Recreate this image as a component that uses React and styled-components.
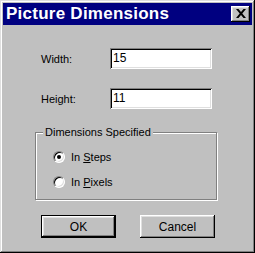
import React from 'react';
import styled, { createGlobalStyle } from 'styled-components';

const GlobalStyle = createGlobalStyle`
  html, body {
    margin: 0;
    padding: 0;
    background: #c0c0c0;
  }
  body {
    font-family: "Liberation Sans", Arial, sans-serif;
  }
`;

const Window = styled.div`
  box-sizing: border-box;
  width: 255px;
  height: 253px;
  padding: 3px;
  background: #c0c0c0;
  box-shadow: inset -1px -1px #000, inset 1px 1px #dfdfdf,
    inset -2px -2px #808080, inset 2px 2px #fff;
  display: flex;
  flex-direction: column;
`;

const TitleBar = styled.div`
  height: 22px;
  background: #000080;
  display: flex;
  align-items: center;
  justify-content: space-between;
  padding: 0 2px 0 3px;
`;

const Title = styled.span`
  color: #fff;
  font-weight: bold;
  font-size: 17px;
  letter-spacing: 0.25px;
  line-height: 22px;
`;

const CloseButton = styled.div`
  box-sizing: border-box;
  width: 19px;
  height: 16px;
  background: #c0c0c0;
  box-shadow: inset -1px -1px #000, inset 1px 1px #fff,
    inset -2px -2px #808080, inset 2px 2px #dfdfdf;
  display: flex;
  align-items: center;
  justify-content: center;
  padding-bottom: 1px;
`;

const Body = styled.div`
  display: flex;
  flex-direction: column;
  padding-left: 32px;
  font-size: 11px;
  color: #000;
`;

const FieldRow = styled.div`
  display: grid;
  grid-template-columns: 69px 102px;
  align-items: center;
  padding-left: 6px;
  margin-top: ${props => props.$top}px;
`;

const Label = styled.span`
  font-size: 11px;
`;

const TextBox = styled.div`
  box-sizing: border-box;
  height: 21px;
  background: #fff;
  box-shadow: inset 1px 1px #808080, inset -1px -1px #fff,
    inset 2px 2px #000, inset -2px -2px #dfdfdf;
  padding: 0 0 0 3px;
  font-size: 12px;
  line-height: 21px;
`;

const GroupBox = styled.div`
  position: relative;
  box-sizing: border-box;
  width: 182px;
  height: 68px;
  margin-top: 23px;
  border: 1px solid #808080;
  box-shadow: inset 1px 1px #fff, 1px 1px #fff;
  padding: 17px 0 0 17px;
  display: flex;
  flex-direction: column;
  gap: 12px;
`;

const GroupLabel = styled.span`
  position: absolute;
  top: -7px;
  left: 7px;
  padding: 0 2px;
  background: #c0c0c0;
  line-height: 13px;
`;

const RadioRow = styled.label`
  display: flex;
  align-items: center;
  gap: 6px;
  height: 13px;
`;

const Radio = styled.span`
  position: relative;
  box-sizing: border-box;
  width: 12px;
  height: 12px;
  border-radius: 50%;
  background: #fff;
  border: 1px solid;
  border-color: #808080 #fff #fff #808080;
  box-shadow: inset 1px 1px #000, inset -1px -1px #dfdfdf;

  &::after {
    content: '';
    display: ${props => (props.$checked ? 'block' : 'none')};
    position: absolute;
    left: 3px;
    top: 3px;
    width: 4px;
    height: 4px;
    border-radius: 50%;
    background: #000;
  }
`;

const Key = styled.span`
  text-decoration: underline;
`;

const ButtonRow = styled.div`
  display: flex;
  gap: 24px;
  margin-top: 15px;
  padding-left: 6px;
`;

const Button = styled.div`
  box-sizing: border-box;
  width: 75px;
  height: 23px;
  background: #c0c0c0;
  display: flex;
  align-items: center;
  justify-content: center;
  font-size: 12px;
  box-shadow: ${props =>
    props.$default
      ? 'inset 0 0 0 1px #000, inset -2px -2px #000, inset 2px 2px #fff, inset -3px -3px #808080, inset 3px 3px #dfdfdf'
      : 'inset -1px -1px #000, inset 1px 1px #fff, inset -2px -2px #808080, inset 2px 2px #dfdfdf'};
`;

function CloseIcon() {
  return (
    <svg width="10" height="9" viewBox="0 0 10 9">
      <path d="M0 0h2.5l2.5 3 2.5-3H10L6.3 4.5 10 9H7.5L5 6 2.5 9H0l3.7-4.5z" fill="#000" />
    </svg>
  );
}

export default function App() {
  return (
    <>
      <GlobalStyle />
      <Window>
        <TitleBar>
          <Title>Picture Dimensions</Title>
          <CloseButton>
            <CloseIcon />
          </CloseButton>
        </TitleBar>
        <Body>
          <FieldRow $top={23}>
            <Label>Width:</Label>
            <TextBox>15</TextBox>
          </FieldRow>
          <FieldRow $top={19}>
            <Label>Height:</Label>
            <TextBox>11</TextBox>
          </FieldRow>
          <GroupBox>
            <GroupLabel>Dimensions Specified</GroupLabel>
            <RadioRow>
              <Radio $checked />
              <span>In <Key>S</Key>teps</span>
            </RadioRow>
            <RadioRow>
              <Radio />
              <span>In <Key>P</Key>ixels</span>
            </RadioRow>
          </GroupBox>
          <ButtonRow>
            <Button $default>OK</Button>
            <Button>Cancel</Button>
          </ButtonRow>
        </Body>
      </Window>
    </>
  );
}
